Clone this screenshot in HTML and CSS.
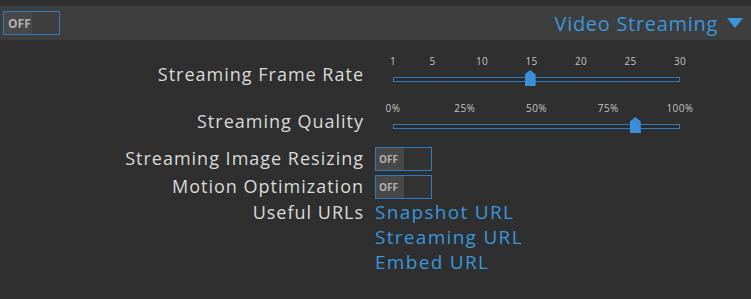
FILE: index.html
```html
<html>
<head>
	<title>Video Streaming</title>
	<meta http-equiv="content-type" content="text/html;charset=utf-8">
	<link rel="stylesheet" href="styles.css">
</head>
<body>
	<!-- section header -->
	<div class="header">
		<div class="toggle big"><span class="off">OFF</span></div>
		<div class="title">Video Streaming <span class="arrow"></span></div>
	</div>
	<!-- settings -->
	<div class="settings">
		<div class="label">Streaming Frame Rate</div>
		<div class="value">
			<div class="slider">
				<div class="ticks">
					<span style="left:0%">1</span>
					<span style="left:13.79%">5</span>
					<span style="left:31.03%">10</span>
					<span style="left:48.28%">15</span>
					<span style="left:65.52%">20</span>
					<span style="left:82.76%">25</span>
					<span style="left:100%">30</span>
				</div>
				<div class="track"><div class="thumb" style="left:47.6%"></div></div>
			</div>
		</div>

		<div class="label">Streaming Quality</div>
		<div class="value">
			<div class="slider">
				<div class="ticks">
					<span style="left:0%">0%</span>
					<span style="left:25%">25%</span>
					<span style="left:50%">50%</span>
					<span style="left:75%">75%</span>
					<span style="left:100%">100%</span>
				</div>
				<div class="track"><div class="thumb" style="left:84.5%"></div></div>
			</div>
		</div>

		<div class="label small">Streaming Image Resizing</div>
		<div class="value small"><div class="toggle"><span class="off">OFF</span></div></div>

		<div class="label small">Motion Optimization</div>
		<div class="value small"><div class="toggle"><span class="off">OFF</span></div></div>

		<div class="label urls">Useful URLs</div>
		<div class="value links">
			<a href="#">Snapshot URL</a>
			<a href="#">Streaming URL</a>
			<a href="#">Embed URL</a>
		</div>
	</div>
</body>
</html>
```

FILE: styles.css
```css
body {
	margin: 0;
	background: #2f2f2f;
	font-family: "Open Sans", "Noto Sans", sans-serif;
	color: #dadada;
	height: 299px;
	overflow: hidden;
}
.header {
	margin-top: 6px;
	height: 34px;
	background: #3e3e3e;
	display: flex;
	align-items: center;
	justify-content: space-between;
	padding: 0 8px 0 3px;
}
.title {
	color: #3a96dd;
	font-size: 20px;
	letter-spacing: 0.7px;
	display: flex;
	align-items: center;
}
.arrow {
	width: 0;
	height: 0;
	margin-left: 9px;
	border-left: 8px solid transparent;
	border-right: 8px solid transparent;
	border-top: 10px solid #3a96dd;
}
.toggle {
	width: 55px;
	height: 22px;
	border: 1px solid #2e7cc0;
	background: #333;
	display: flex;
}
.toggle .off {
	width: 28px;
	background: #484848;
	color: #b0b0b0;
	font-size: 10px;
	font-weight: bold;
	display: flex;
	align-items: center;
	padding-left: 3px;
	box-sizing: border-box;
}
.toggle.big {
	background: #3e3e3e;
}
.toggle.big .off {
	font-size: 12px;
	padding-left: 4px;
}
.settings {
	display: grid;
	grid-template-columns: 363px 1fr;
	column-gap: 12px;
	row-gap: 5px;
	padding-top: 13px;
}
.label {
	text-align: right;
	font-size: 18px;
	letter-spacing: 1px;
	height: 42px;
	line-height: 42px;
	margin-right: -1px;
}
.label.small {
	height: 23px;
	line-height: 23px;
}
.label.urls {
	height: 25px;
	line-height: 25px;
	margin-top: -3px;
}
.slider {
	margin-left: 18px;
	width: 287px;
	position: relative;
	height: 42px;
}
.ticks {
	position: relative;
	height: 16px;
	font-size: 10px;
	letter-spacing: 0.4px;
	color: #c4c4c4;
}
.ticks span {
	position: absolute;
	top: 1px;
	transform: translateX(-50%);
}
.track {
	position: relative;
	margin-top: 8px;
	height: 3px;
	border: 1px solid #2e7cc0;
	background: #2a2a2a;
}
.thumb {
	position: absolute;
	top: -8px;
	width: 11px;
	height: 16px;
	margin-left: -5px;
	background: #3a8fd8;
	clip-path: polygon(50% 0, 100% 28%, 100% 100%, 0 100%, 0 28%);
}
.value.small {
	height: 23px;
}
.links {
	display: flex;
	flex-direction: column;
	align-items: flex-start;
	margin-top: -3px;
}
.links a {
	color: #3a96dd;
	text-decoration: none;
	font-size: 19px;
	letter-spacing: 1.3px;
	line-height: 25px;
}
```
